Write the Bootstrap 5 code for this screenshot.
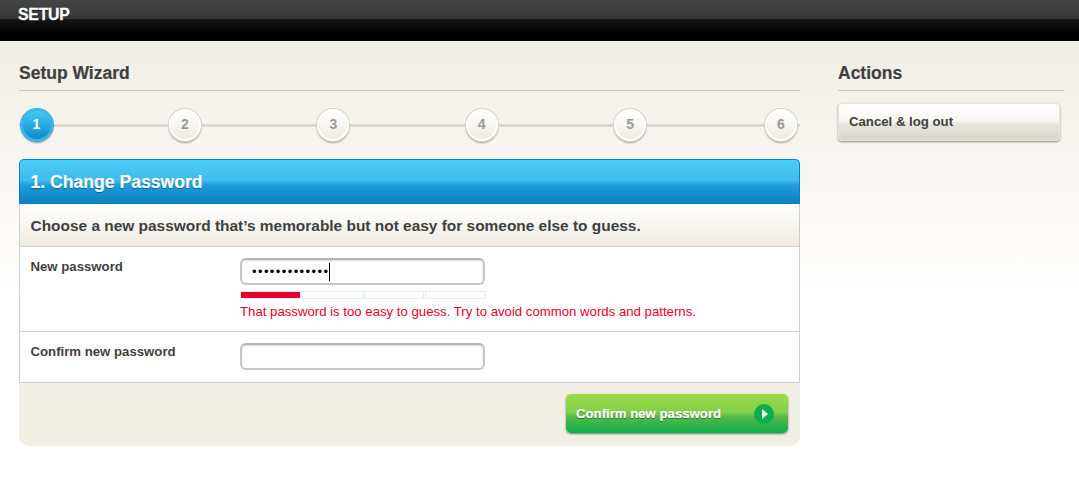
<!DOCTYPE html>
<html lang="en">
<head>
    <meta charset="UTF-8">
    <title>Setup Wizard</title>
    <link href="https://cdn.jsdelivr.net/npm/bootstrap@5.3.0/dist/css/bootstrap.min.css" rel="stylesheet">
    <style>
        html, body { height: 100%; }
        body { font-family: "Liberation Sans", Arial, sans-serif; color: #3f3f3f; font-size: 13.2px; overflow: hidden;
            background: #fff linear-gradient(#f1eee6 41px, #fff 295px) no-repeat; }
        .top-bar { height: 41px; padding-left: 18px; background: linear-gradient(#454545 0, #373737 19px, #161616 19px, #000 34px); }
        .top-title { font-size: 15.8px; line-height: 29px; font-weight: 700; color: #fff; letter-spacing: -.2px; -webkit-text-stroke: .3px #fff; text-shadow: 0 1px 1px rgba(0,0,0,.6); }
        .page-wrap { padding: 0 15px 0 19px; gap: 38px; }
        .main-col { width: 781px; }
        .side-col { width: 226px; }
        .sect-title { font-size: 17.5px; line-height: 21px; font-weight: 700; margin: 0; padding: 22px 0 6px; border-bottom: 1px solid #cbc7bf; height: 50px; -webkit-text-stroke: .2px #3f3f3f; }
        .steps { height: 68px; padding: 0 3px 0 1.5px; background: linear-gradient(#d9d7d0, #d9d7d0) no-repeat 0 33px / 100% 3px; }
        .step-dot { width: 32px; height: 32px; margin-top: -1px; border-radius: 50%; background: linear-gradient(#fff, #efebe0); border: 2px solid #fff; box-shadow: 0 0 0 1px #d5d2ca, 0 2px 2px rgba(0,0,0,.35); color: #999; font-weight: 700; font-size: 14px; }
        .step-dot:last-child { margin-left: 2.5px; }
        .step-dot.active { background: linear-gradient(#45c8f6, #0b8ccd); border-color: #35b5e6; color: #fff; box-shadow: 0 0 0 1px #2aa6dc, 0 2px 2px rgba(0,0,0,.35); }
        .panel-head { height: 45px; padding-left: 10.5px; background: linear-gradient(#4accf8 0, #3ebdee 46%, #1f9cd9 58%, #0a81c2 100%); border: 1px solid #0d7fbd; border-bottom: 0; border-radius: 5px 5px 0 0; color: #fff; font-size: 17.6px; font-weight: 700; -webkit-text-stroke: .2px #fff; text-shadow: 0 1px 1px rgba(0,60,100,.6); }
        .panel-sub { height: 43px; padding: 1px 0 0 10.5px; background: linear-gradient(#fff, #efebe3); border: 1px solid #cfcfcf; border-top: 0; font-size: 15.45px; font-weight: 700; }
        .form-line { border: 1px solid #cfcfcf; border-top: 0; background: #fff; padding: 11px 0 0 10.5px; }
        .form-line.first { height: 85px; }
        .form-line.second { height: 51px; }
        .form-lbl { width: 209.5px; font-weight: 700; margin: 0; line-height: 18px; }
        .field { width: 245px; height: 27px; border: 2px solid #c6c6c6; border-top-color: #b4b4b4; border-radius: 6px; box-shadow: inset 0 1px 2px rgba(0,0,0,.15); background: #fff; padding-left: 10px; color: #000; }
        .pw-dots { font-size: 13px; letter-spacing: 1.4px; line-height: 18px; border-right: 1px solid #000; }
        .meter { width: 246px; height: 8px; margin-top: 6px; gap: 1px; }
        .meter-seg { flex: 1; border: 1px solid #e3ecf2; background: #fff; }
        .meter-seg.on { background: #e8002d; border-color: #e3ecf2; }
        .pw-error { color: #e4002e; line-height: 15px; margin-top: 5px; white-space: nowrap; }
        .panel-foot { height: 63px; background: #f1eee6; border-radius: 0 0 10px 10px; padding: 11px 12px 0 0; }
        .go-btn { width: 222px; height: 39px; padding: 0 14px 0 10px; border: 0; border-radius: 5px; background: linear-gradient(#9bdc46 0, #84cf4a 46%, #52b84b 60%, #0db04b 100%); color: #fff; font-weight: 700; font-size: 13.2px; -webkit-text-stroke: .2px #fff; text-shadow: 0 1px 1px rgba(0,80,0,.6); box-shadow: 0 1px 2px rgba(0,0,0,.5); }
        .cancel-btn { width: 222px; height: 38px; margin-top: 12px; padding: 0 10px; border: 1px solid #e8e5dd; border-radius: 4px; background: linear-gradient(#fff 0, #f8f7f3 46%, #e7e4db 58%, #d9d5c9 100%); color: #3f3f3f; font-weight: 700; font-size: 13.2px; box-shadow: 0 1px 2px rgba(0,0,0,.45); }
    </style>
</head>
<body>
<!-- top bar -->
<div class="top-bar"><span class="top-title">SETUP</span></div>

<div class="d-flex page-wrap">
    <div class="main-col">
        <h2 class="sect-title">Setup Wizard</h2>

        <!-- steps -->
        <div class="steps d-flex justify-content-between align-items-center">
            <div class="step-dot active d-flex align-items-center justify-content-center">1</div>
            <div class="step-dot d-flex align-items-center justify-content-center">2</div>
            <div class="step-dot d-flex align-items-center justify-content-center">3</div>
            <div class="step-dot d-flex align-items-center justify-content-center">4</div>
            <div class="step-dot d-flex align-items-center justify-content-center">5</div>
            <div class="step-dot d-flex align-items-center justify-content-center">6</div>
        </div>

        <form>
            <div class="panel-head d-flex align-items-center">1. Change Password</div>
            <div class="panel-sub d-flex align-items-center">Choose a new password that’s memorable but not easy for someone else to guess.</div>

            <div class="form-line first d-flex">
                <label class="form-lbl">New password</label>
                <div>
                    <div class="field d-flex align-items-center"><span class="pw-dots">•••••••••••••</span></div>
                    <div class="meter d-flex">
                        <div class="meter-seg on"></div>
                        <div class="meter-seg"></div>
                        <div class="meter-seg"></div>
                        <div class="meter-seg"></div>
                    </div>
                    <div class="pw-error">That password is too easy to guess. Try to avoid common words and patterns.</div>
                </div>
            </div>

            <div class="form-line second d-flex">
                <label class="form-lbl">Confirm new password</label>
                <input type="password" class="field">
            </div>

            <div class="panel-foot d-flex justify-content-end">
                <button type="button" class="go-btn d-flex align-items-center justify-content-between">
                    Confirm new password
                    <svg width="20" height="20" viewBox="0 0 20 20"><circle cx="10" cy="10" r="10" fill="#0bae50"/><path d="M8 5 14 10 8 15Z" fill="#f2fbe6"/></svg>
                </button>
            </div>
        </form>
    </div>

    <div class="side-col">
        <h2 class="sect-title">Actions</h2>
        <button type="button" class="cancel-btn d-block text-start">Cancel &amp; log out</button>
    </div>
</div>
</body>
</html>
